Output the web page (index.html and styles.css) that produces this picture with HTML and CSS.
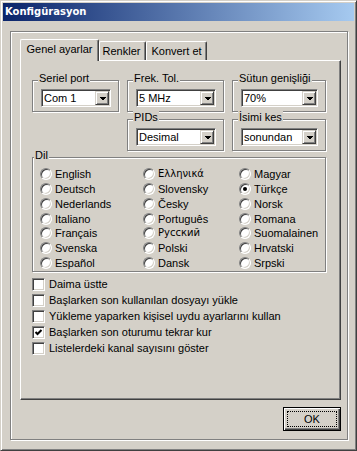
FILE: index.html
```html
<!DOCTYPE html>
<html lang="tr">
<head>
  <meta charset="UTF-8">
  <title>Konfigürasyon</title>
  <link rel="stylesheet" href="styles.css">
</head>
<body>
  <div class="window">
    <div class="titlebar">Konfigürasyon</div>

    <div class="frame">
      <div class="tabs">
        <div class="tab tab-active tab-genel">Genel ayarlar</div>
        <div class="tab tab-renkler">Renkler</div>
        <div class="tab tab-konvert">Konvert et</div>
      </div>

      <div class="panel">
        <div class="groups">
          <div class="group">
            <span class="legend">Seriel port</span>
            <div class="combo"><span class="combo-text">Com 1</span><span class="combo-btn"><svg width="7" height="4" viewBox="0 0 7 4"><polygon points="0,0 7,0 3.5,3.5" fill="#000"/></svg></span></div>
          </div>
          <div class="group">
            <span class="legend">Frek. Tol.</span>
            <div class="combo"><span class="combo-text">5 MHz</span><span class="combo-btn"><svg width="7" height="4" viewBox="0 0 7 4"><polygon points="0,0 7,0 3.5,3.5" fill="#000"/></svg></span></div>
          </div>
          <div class="group">
            <span class="legend">Sütun genişliği</span>
            <div class="combo"><span class="combo-text">70%</span><span class="combo-btn"><svg width="7" height="4" viewBox="0 0 7 4"><polygon points="0,0 7,0 3.5,3.5" fill="#000"/></svg></span></div>
          </div>

          <div class="group group-pids">
            <span class="legend">PIDs</span>
            <div class="combo"><span class="combo-text">Desimal</span><span class="combo-btn"><svg width="7" height="4" viewBox="0 0 7 4"><polygon points="0,0 7,0 3.5,3.5" fill="#000"/></svg></span></div>
          </div>
          <div class="group">
            <span class="legend">İsimi kes</span>
            <div class="combo"><span class="combo-text">sonundan</span><span class="combo-btn"><svg width="7" height="4" viewBox="0 0 7 4"><polygon points="0,0 7,0 3.5,3.5" fill="#000"/></svg></span></div>
          </div>

          <div class="group group-dil">
            <span class="legend legend-dil">Dil</span>
            <div class="radios">
              <label class="radio"><span class="radio-dot"></span>English</label>
              <label class="radio"><span class="radio-dot"></span>Deutsch</label>
              <label class="radio"><span class="radio-dot"></span>Nederlands</label>
              <label class="radio"><span class="radio-dot"></span>Italiano</label>
              <label class="radio"><span class="radio-dot"></span>Français</label>
              <label class="radio"><span class="radio-dot"></span>Svenska</label>
              <label class="radio"><span class="radio-dot"></span>Español</label>
              <label class="radio"><span class="radio-dot"></span><span class="alt-script">Ελληνικά</span></label>
              <label class="radio"><span class="radio-dot"></span>Slovensky</label>
              <label class="radio"><span class="radio-dot"></span>Česky</label>
              <label class="radio"><span class="radio-dot"></span>Português</label>
              <label class="radio"><span class="radio-dot"></span><span class="alt-script">Русский</span></label>
              <label class="radio"><span class="radio-dot"></span>Polski</label>
              <label class="radio"><span class="radio-dot"></span>Dansk</label>
              <label class="radio"><span class="radio-dot"></span>Magyar</label>
              <label class="radio"><span class="radio-dot checked"></span>Türkçe</label>
              <label class="radio"><span class="radio-dot"></span>Norsk</label>
              <label class="radio"><span class="radio-dot"></span>Romana</label>
              <label class="radio"><span class="radio-dot"></span>Suomalainen</label>
              <label class="radio"><span class="radio-dot"></span>Hrvatski</label>
              <label class="radio"><span class="radio-dot"></span>Srpski</label>
            </div>
          </div>
        </div>

        <div class="checks">
          <label class="check"><span class="check-box"></span>Daima üstte</label>
          <label class="check"><span class="check-box"></span>Başlarken son kullanılan dosyayı yükle</label>
          <label class="check"><span class="check-box"></span>Yükleme yaparken kişisel uydu ayarlarını kullan</label>
          <label class="check"><span class="check-box"><svg width="9" height="9" viewBox="0 0 9 9"><polyline points="1.5,4 3.5,6 7.5,2" fill="none" stroke="#000" stroke-width="2"/></svg></span>Başlarken son oturumu tekrar kur</label>
          <label class="check"><span class="check-box"></span>Listelerdeki kanal sayısını göster</label>
        </div>
      </div>

      <div class="actions">
        <button class="btn-ok"><span class="focus">OK</span></button>
      </div>
    </div>
  </div>
</body>
</html>
```

FILE: styles.css
```css
body {
  margin: 0;
  background: #d4d0c8;
  font-family: "Liberation Sans", Arial, sans-serif;
  font-size: 11px;
  color: #000;
}

.window {
  box-sizing: border-box;
  width: 357px;
  height: 451px;
  padding: 2px;
  border: 1px solid;
  border-color: #d4d0c8 #404040 #404040 #d4d0c8;
  box-shadow: inset 1px 1px #fff, inset -1px -1px #808080;
  background: #d4d0c8;
}

.titlebar {
  height: 18px;
  line-height: 18px;
  padding-left: 2px;
  background: linear-gradient(to right, #0a246a, #a6caf0);
  color: #fff;
  font-family: "DejaVu Sans", Verdana, sans-serif;
  font-weight: bold;
  font-size: 10px;
}

/* etched frame round tabs + button */
.frame {
  box-sizing: border-box;
  width: 338px;
  height: 409px;
  margin: 10px 0 0 7px;
  padding: 7px 6px 8px 9px;
  border: 1px solid #808080;
  box-shadow: inset 1px 1px #fff, 1px 1px #fff;
}

.tabs {
  display: flex;
  align-items: flex-end;
  height: 21px;
}

.tab {
  box-sizing: border-box;
  height: 19px;
  padding-top: 3px;
  line-height: 13px;
  text-align: center;
  border: 1px solid;
  border-bottom: none;
  border-color: #fff #404040 #fff #fff;
  border-radius: 2px 2px 0 0;
  box-shadow: inset -1px 0 #808080;
  background: #d4d0c8;
}

.tab-active {
  position: relative;
  z-index: 1;
  height: 22px;
  margin-bottom: -1px;
  padding-top: 3px;
}

.tab-genel { width: 79px; }
.tab-renkler { width: 47px; padding-right: 2px; }
.tab-konvert { width: 61px; }

.panel {
  box-sizing: border-box;
  width: 321px;
  height: 340px;
  padding: 19px 14px 0 11px;
  border: 1px solid;
  border-color: #fff #404040 #404040 #fff;
  box-shadow: inset -1px -1px #808080;
}

.groups {
  display: grid;
  grid-template-columns: 87px 97px 1fr;
  column-gap: 8px;
  row-gap: 7px;
}

.group {
  position: relative;
  box-sizing: border-box;
  height: 32px;
  padding: 8px 7px 0 8px;
  border: 1px solid #808080;
  box-shadow: inset 1px 1px #fff, 1px 1px #fff;
}

.group-pids { grid-column: 2; }

.group-dil {
  grid-column: 1 / -1;
  height: 115px;
  margin-top: -1px;
  padding: 9px 0 0 7px;
}

.legend {
  position: absolute;
  top: -9px;
  left: 5px;
  padding: 0 1px;
  line-height: 13px;
  background: #d4d0c8;
  white-space: nowrap;
}

.legend-dil { left: 1px; }

.combo {
  box-sizing: border-box;
  display: flex;
  align-items: center;
  height: 18px;
  padding: 1px;
  border: 1px solid;
  border-color: #808080 #fff #fff #808080;
  box-shadow: inset 1px 1px #404040, inset -1px -1px #d4d0c8;
  background: #fff;
}

.combo-text {
  flex: 1;
  padding-left: 1px;
  line-height: 14px;
}

.combo-btn {
  box-sizing: border-box;
  display: flex;
  align-items: center;
  justify-content: center;
  width: 14px;
  height: 14px;
  padding-top: 1px;
  border: 1px solid;
  border-color: #d4d0c8 #404040 #404040 #d4d0c8;
  box-shadow: inset 1px 1px #fff, inset -1px -1px #808080;
  background: #d4d0c8;
}

.combo-btn svg { display: block; shape-rendering: crispEdges; }

.radios {
  display: grid;
  grid-template-columns: 103px 96px 1fr;
  grid-template-rows: repeat(7, 14.75px);
  grid-auto-flow: column;
}

.radio {
  display: flex;
  align-items: center;
  gap: 3px;
  white-space: nowrap;
}

.alt-script {
  font-family: "DejaVu Sans", sans-serif;
  font-size: 10px;
  margin-top: -2px;
}

.radio-dot {
  position: relative;
  box-sizing: border-box;
  width: 12px;
  height: 12px;
  border: 1px solid;
  border-color: #808080 #fff #fff #808080;
  border-radius: 50%;
  box-shadow: inset 1px 1px #404040, inset -1px -1px #d4d0c8;
  background: #fff;
}

.radio-dot.checked::after {
  content: "";
  position: absolute;
  left: 3px;
  top: 3px;
  width: 4px;
  height: 4px;
  border-radius: 50%;
  background: #000;
}

.checks {
  margin-top: 4px;
}

.check {
  display: flex;
  align-items: center;
  gap: 4px;
  height: 16px;
  white-space: nowrap;
}

.check-box {
  box-sizing: border-box;
  display: flex;
  align-items: center;
  justify-content: center;
  width: 13px;
  height: 13px;
  border: 1px solid;
  border-color: #808080 #fff #fff #808080;
  box-shadow: inset 1px 1px #404040, inset -1px -1px #d4d0c8;
  background: #fff;
}

.check-box svg { display: block; }

.actions {
  display: flex;
  justify-content: flex-end;
  margin-top: 7px;
}

.btn-ok {
  box-sizing: border-box;
  width: 58px;
  height: 24px;
  padding: 3px;
  border: 1px solid #000;
  box-shadow: inset 1px 1px #fff, inset -1px -1px #404040, inset -2px -2px #808080;
  background: #d4d0c8;
  font: inherit;
  color: #000;
}

.btn-ok .focus {
  display: block;
  box-sizing: border-box;
  height: 100%;
  line-height: 14px;
  border: 1px dotted #000;
}
```
